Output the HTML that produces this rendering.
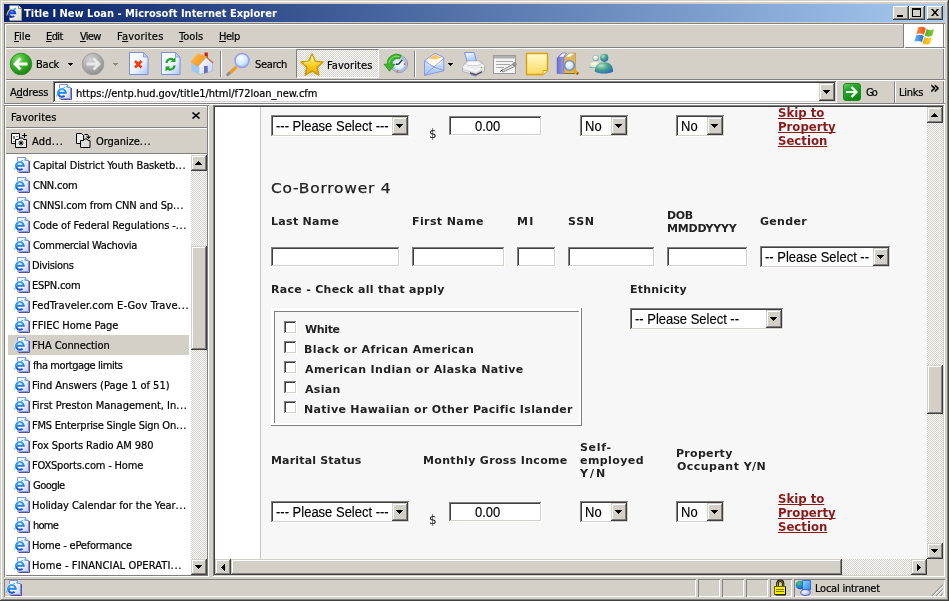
<!DOCTYPE html>
<html><head><meta charset="utf-8"><title>Title I New Loan - Microsoft Internet Explorer</title>
<style>
*{box-sizing:border-box;margin:0;padding:0}
html,body{width:949px;height:601px;overflow:hidden;background:#d4d0c8}
body{position:relative;font:11px 'DejaVu Sans Condensed','Liberation Sans',sans-serif;color:#000;cursor:default;-webkit-text-stroke-width:.2px}
#w{position:absolute;left:0;top:0;width:949px;height:601px;will-change:transform;overflow:hidden}
.a{position:absolute}
.t{position:absolute;white-space:pre;line-height:13px;height:13px}
svg{position:absolute;overflow:visible}
.btn{position:absolute;background:#d4d0c8;box-shadow:inset -1px -1px 0 #404040,inset 1px 1px 0 #fff,inset -2px -2px 0 #808080,inset 2px 2px 0 #d4d0c8}
.sbtn{position:absolute;background:#d4d0c8;box-shadow:inset -1px -1px 0 #404040,inset 1px 1px 0 #d4d0c8,inset -2px -2px 0 #808080,inset 2px 2px 0 #fff}
.trk{position:absolute;background-color:#eae8e4;background-image:conic-gradient(#fff 25%,#d4d0c8 0 50%,#fff 0 75%,#d4d0c8 0);background-size:2px 2px}
.sunk{position:absolute;box-shadow:inset -1px -1px 0 #fff,inset 1px 1px 0 #808080,inset -2px -2px 0 #d4d0c8,inset 2px 2px 0 #404040}
.inp{position:absolute;background:#fff;box-shadow:inset -1px -1px 0 #fff,inset 1px 1px 0 #808080,inset -2px -2px 0 #d4d0c8,inset 2px 2px 0 #404040}
.pg{font:bold 11px 'DejaVu Sans','Liberation Sans',sans-serif;letter-spacing:.3px;color:#222;-webkit-text-stroke-width:0}
.sel{font:13px 'Liberation Sans',sans-serif;color:#000;-webkit-text-stroke-width:.15px;transform:scaleY(1.1);transform-origin:0 12px}
.lnk{font:bold 13px 'DejaVu Sans Condensed','Liberation Sans',sans-serif;color:#8b1a1a;-webkit-text-stroke-width:0;text-decoration:underline;text-decoration-skip-ink:none;line-height:14px;height:auto}
.h1{font:14px 'DejaVu Sans','Liberation Sans',sans-serif;letter-spacing:.5px;color:#222;-webkit-text-stroke-width:.25px;line-height:18px;height:18px;transform:scaleX(1.1);transform-origin:0 0}
.hl{position:absolute;height:1px}
.vl{position:absolute;width:1px}
</style></head>
<body>
<div id="w">
<svg style="left:0;top:0" width="0" height="0"><defs><linearGradient id="tpg" x1="0" y1="0" x2="1" y2="1"><stop offset="0" stop-color="#fdfdf8"/><stop offset="1" stop-color="#dcdccc"/></linearGradient><linearGradient id="ipg" x1="0" y1="0" x2="1" y2="1"><stop offset="0" stop-color="#fff"/><stop offset=".45" stop-color="#f4f5ff"/><stop offset="1" stop-color="#c4ccf6"/></linearGradient><linearGradient id="ie" gradientUnits="userSpaceOnUse" x1="0" y1="4" x2="0" y2="14"><stop offset="0" stop-color="#3aa8f6"/><stop offset=".5" stop-color="#1e7ee8"/><stop offset="1" stop-color="#1a4cc0"/></linearGradient></defs></svg>
<div class="a" style="left:0;top:0;width:949px;height:601px;background:#d4d0c8;box-shadow:inset -1px -1px 0 #404040,inset 1px 1px 0 #d4d0c8,inset -2px -2px 0 #808080,inset 2px 2px 0 #fff"></div>
<div class="a" style="left:4px;top:4px;width:941px;height:18px;background:linear-gradient(90deg,#0a246a 0%,#0a246a 2%,#a6caf0 100%)"></div>
<svg style="left:6px;top:5px" width="16" height="16" viewBox="0 0 16 16"><path d="M3.500.500h9l3 3v12h-12z" fill="url(#tpg)"/><path d="M12.500.500v3h3" fill="#fff" stroke="#6a6a60" stroke-width=".8"/><path d="M4 15.500h11.500V4" fill="none" stroke="#9a9888" stroke-width="1"/><path d="M2.800 8.200h6.400a3.200 3.200 0 1 0-1 2.800" fill="none" stroke="#1a44d8" stroke-width="2"/><path d="M7.500 4.500l2.500-1" stroke="#30b0f8" stroke-width="1.400"/><path d="M.800 10.500C1.500 7 3 5 5 3.800" fill="none" stroke="#e8c040" stroke-width="1.100"/><path d="M3.500 12h2" stroke="#000" stroke-width="1"/></svg>
<div class="t tt" style="left:24px;top:7px;color:#fff;font-weight:bold;-webkit-text-stroke-width:0;line-height:14px;height:14px">Title I New Loan - Microsoft Internet Explorer</div>
<div class="btn" style="left:893px;top:6px;width:16px;height:14px"></div>
<div class="btn" style="left:909px;top:6px;width:16px;height:14px"></div>
<div class="btn" style="left:927px;top:6px;width:16px;height:14px"></div>
<div class="a" style="left:897px;top:15px;width:6px;height:2px;background:#000"></div>
<div class="a" style="left:912px;top:8px;width:9px;height:9px;border:1px solid #000;border-top-width:2px"></div>
<svg style="left:931px;top:9px" width="8" height="7" viewBox="0 0 8 7"><path d="M0 0h2l2 2.5L6 0h2L5 3.5 8 7H6L4 4.5 2 7H0l3-3.5z" fill="#000"/></svg>
<div class="a" style="left:4px;top:23px;width:941px;height:1px;background:#808080"></div>
<div class="a" style="left:4px;top:24px;width:941px;height:1px;background:#fff"></div>
<div class="t mn" style="left:14px;top:30px;"><u>F</u>ile</div>
<div class="t mn" style="left:46px;top:30px;letter-spacing:-0.6px;"><u>E</u>dit</div>
<div class="t mn" style="left:80px;top:30px;letter-spacing:-0.73px;"><u>V</u>iew</div>
<div class="t mn" style="left:117px;top:30px;letter-spacing:0.21px;">F<u>a</u>vorites</div>
<div class="t mn" style="left:179px;top:30px;"><u>T</u>ools</div>
<div class="t mn" style="left:219px;top:30px;letter-spacing:-0.47px;"><u>H</u>elp</div>
<div class="a" style="left:904px;top:24px;width:39px;height:23px;background:#fff"></div>
<div class="a" style="left:903px;top:24px;width:1px;height:23px;background:#808080"></div>
<div class="a" style="left:904px;top:24px;width:1px;height:24px;background:#fff"></div>
<div class="a" style="left:943px;top:24px;width:1px;height:80px;background:#808080"></div>
<div class="a" style="left:944px;top:24px;width:1px;height:80px;background:#fff"></div>
<svg style="left:0;top:0" width="949" height="60" viewBox="0 0 949 60"><defs><linearGradient id="wr" x1="0" x2="1"><stop offset="0" stop-color="#ff8a3c"/><stop offset="1" stop-color="#e8501c"/></linearGradient><linearGradient id="wg" x1="0" x2="1"><stop offset="0" stop-color="#5aa52c"/><stop offset="1" stop-color="#7fd22c"/></linearGradient><linearGradient id="wb" x1="0" x2="1"><stop offset="0" stop-color="#6cb6f8"/><stop offset="1" stop-color="#2a6cc8"/></linearGradient><linearGradient id="wy" x1="0" x2="1"><stop offset="0" stop-color="#f0a818"/><stop offset="1" stop-color="#ffd62c"/></linearGradient></defs><path d="M918 27.600c2.600-1.300 5.300-1 7.800.6L924 34.800c-2.300-1.400-4.900-1.600-7.600-.4z" fill="url(#wr)"/><path d="M926.500 29c2.400 1.500 5 1.600 7.500 0l-1.700 6.500c-2.500 1.500-5 1.500-7.500 0z" fill="url(#wg)"/><path d="M916 35.500c2.600-1.300 5.200-1.100 7.700.4l-1.700 6.400c-2.400-1.400-5-1.600-7.700-.4z" fill="url(#wb)"/><path d="M924.300 37c2.400 1.500 5 1.600 7.500 0l-1.700 6.400c-2.500 1.600-5 1.600-7.500.1z" fill="url(#wy)"/></svg>
<div class="a" style="left:4px;top:47px;width:941px;height:1px;background:#808080"></div>
<div class="a" style="left:4px;top:48px;width:941px;height:1px;background:#fff"></div>
<div class="a" style="left:904px;top:24px;width:1px;height:24px;background:#fff"></div>
<div class="trk" style="left:297px;top:50px;width:81px;height:27px"></div>
<svg style="left:0;top:0" width="949" height="601" viewBox="0 0 949 601">
<defs>
<radialGradient id="gB" cx=".38" cy=".3" r=".75"><stop offset="0" stop-color="#8ee06a"/><stop offset=".45" stop-color="#3cb42c"/><stop offset="1" stop-color="#1a7a14"/></radialGradient>
<radialGradient id="gF" cx=".38" cy=".3" r=".75"><stop offset="0" stop-color="#d4d4d4"/><stop offset=".5" stop-color="#b0b0b0"/><stop offset="1" stop-color="#8c8c8c"/></radialGradient>
<linearGradient id="gP" x1="0" y1="0" x2="1" y2="1"><stop offset="0" stop-color="#ffffff"/><stop offset=".55" stop-color="#eef3ff"/><stop offset="1" stop-color="#a9c6f5"/></linearGradient>
<radialGradient id="gL" cx=".4" cy=".35" r=".7"><stop offset="0" stop-color="#ffffff"/><stop offset=".6" stop-color="#cfe8ff"/><stop offset="1" stop-color="#8fc0f2"/></radialGradient>
<linearGradient id="gS" x1="0" y1="0" x2="0" y2="1"><stop offset="0" stop-color="#fff27a"/><stop offset=".5" stop-color="#fdd22a"/><stop offset="1" stop-color="#e9a500"/></linearGradient>
<linearGradient id="gN" x1="0" y1="0" x2="0" y2="1"><stop offset="0" stop-color="#fffbd0"/><stop offset="1" stop-color="#ffd95e"/></linearGradient>
<linearGradient id="gM" x1="0" y1="0" x2="0" y2="1"><stop offset="0" stop-color="#eaf3ff"/><stop offset="1" stop-color="#9fc6f3"/></linearGradient>
<linearGradient id="gK" x1="0" y1="0" x2="1" y2="0"><stop offset="0" stop-color="#6d6fd0"/><stop offset="1" stop-color="#a7a9ee"/></linearGradient>
<radialGradient id="gG" cx=".4" cy=".3" r=".8"><stop offset="0" stop-color="#9ad8b4"/><stop offset=".5" stop-color="#3f9c7c"/><stop offset="1" stop-color="#2a6cb8"/></radialGradient>
<radialGradient id="gC" cx=".5" cy=".5" r=".5"><stop offset="0" stop-color="#ffffff"/><stop offset=".7" stop-color="#d8ecfa"/><stop offset="1" stop-color="#9cc4e4"/></radialGradient>
</defs>
<!-- Back -->
<circle cx="21" cy="64" r="10.800" fill="url(#gB)" stroke="#2a8a1e" stroke-width=".8"/>
<path d="M27.500 64H16M20.500 58.500L15 64l5.500 5.500" fill="none" stroke="#fff" stroke-width="2.800" stroke-linejoin="miter"/>
<path d="M68 63h5v1h-1v1h-1v1h-1v-1h-1v-1h-1z" fill="#000"/>
<!-- Forward -->
<circle cx="93" cy="64" r="10.800" fill="url(#gF)" stroke="#9a9a9a" stroke-width=".8"/>
<path d="M86.500 64H98M93.500 58.500L99 64l-5.500 5.500" fill="none" stroke="#e8e8e8" stroke-width="2.800"/>
<path d="M113 63h5v1h-1v1h-1v1h-1v-1h-1v-1h-1z" fill="#8a8a8a"/>
<!-- Stop -->
<path d="M129.500 52.500h14l4.500 4.500v17.500h-18.500z" fill="url(#gP)" stroke="#7d8fd0"/>
<path d="M143.500 52.500v4.500h4.500z" fill="#c2d4f7" stroke="#7d8fd0" stroke-width=".8"/>
<path d="M135 61l6.500 6.500M141.500 61L135 67.500" stroke="#f03a14" stroke-width="2.600"/>
<!-- Refresh -->
<path d="M161.500 52.500h14l4.500 4.500v17.500h-18.500z" fill="url(#gP)" stroke="#7d8fd0"/>
<path d="M175.500 52.500v4.500h4.500z" fill="#c2d4f7" stroke="#7d8fd0" stroke-width=".8"/>
<path d="M166.500 63a4.300 4.300 0 0 1 7.500-2.600" fill="none" stroke="#1fa32a" stroke-width="2.200"/>
<path d="M175.500 57v5h-5z" fill="#1fa32a"/>
<path d="M174.500 65.500a4.300 4.300 0 0 1-7.500 2.600" fill="none" stroke="#1fa32a" stroke-width="2.200"/>
<path d="M165.500 71.500v-5h5z" fill="#1fa32a"/>
<!-- Home -->
<defs><linearGradient id="gR" x1="0" y1="0" x2="1" y2="1"><stop offset="0" stop-color="#ffc04a"/><stop offset="1" stop-color="#f08a1e"/></linearGradient>
<linearGradient id="gW" x1="0" y1="0" x2="1" y2="1"><stop offset="0" stop-color="#ffffff"/><stop offset="1" stop-color="#c6d2f2"/></linearGradient></defs>
<path d="M204.500 52.500h3.300v5l-3.300-2z" fill="#c4200e"/>
<path d="M191 62.500l7 3.500.5 8.700-7-4.200z" fill="#9cc8f4"/>
<path d="M199 65.500l7.200-8 6.300 5.500-.2 8-6.800 2.200-6.500 1.200z" fill="url(#gW)" stroke="#a4a8dc" stroke-width=".6"/>
<path d="M190.300 61.800l7.700-8.600 8.500 3.200-7.700 9.200-1.500 1z" fill="url(#gR)"/>
<path d="M206.300 57l6.800 6" stroke="#b4764a" stroke-width="1.200" fill="none"/>
<path d="M204 66h3.800v6.600l-3.800.8z" fill="#6a70bc"/>
<!-- sep -->
<path d="M220.500 51v26" stroke="#808080"/><path d="M221.500 51v26" stroke="#fff"/>
<!-- Search -->
<path d="M236.500 67l-8 7" stroke="#ee9a2a" stroke-width="3.200" stroke-linecap="butt"/>
<path d="M229 73.500l-1.300 1.200" stroke="#8a8aa0" stroke-width="3" stroke-linecap="round"/>
<circle cx="242" cy="60.500" r="7" fill="url(#gL)" stroke="#949ce4" stroke-width="1.500"/>
<!-- Favorites pressed -->
<path d="M296.500 77.500v-28h82" fill="none" stroke="#808080"/>
<path d="M297 77.500h81.500V50" fill="none" stroke="#fff"/>
<path d="M312.0 54.0L315.2 61.2L323.0 62.0L317.1 67.3L318.8 75.0L312.0 71.0L305.2 75.0L306.9 67.3L301.0 62.0L308.8 61.2z" fill="url(#gS)" stroke="#d09a10" stroke-width="1.600" stroke-linejoin="round"/>
<path d="M312 56.500l1.800 5.300M305 62.500l4.500-.3" stroke="#fff8b0" stroke-width="1" fill="none" stroke-linecap="round"/>
<!-- History -->
<circle cx="399" cy="64" r="8.600" fill="#c4c4d0" stroke="#9a9aae" stroke-width="1"/>
<circle cx="399" cy="64" r="6.800" fill="url(#gC)" stroke="#8fb4e4" stroke-width=".8"/>
<path d="M398.500 64.300l3.800-4.500M398.500 64.300h-2.800" stroke="#3c3c48" stroke-width="1.500" fill="none"/>
<circle cx="404.600" cy="64" r=".9" fill="#f4602c"/><circle cx="397.500" cy="71" r=".9" fill="#f4602c"/>
<path d="M401 55.200A9.300 9.300 0 0 0 387.300 64.200H384l5.600 7 5.400-7h-3.300a5.400 5.400 0 0 1 7.800-5.200z" fill="#3fb52a" stroke="#1c8a18" stroke-width=".7" stroke-linejoin="round"/>
<path d="M399.500 56.500a8 8 0 0 0-10.500 6.500" fill="none" stroke="#8ee46a" stroke-width="1"/>
<!-- sep -->
<path d="M414.500 51v26" stroke="#808080"/><path d="M415.500 51v26" stroke="#fff"/>
<!-- Mail -->
<path d="M424.500 60.800l10.300-7.600 9 4.200v13.400l-19.300 4.600z" fill="url(#gM)" stroke="#8f97e0" stroke-width="1"/>
<path d="M427.500 59.500l7.300-5 7.200 3.300-.8 5.200-6.400 3.500-7-2.500z" fill="#fffaf0"/>
<path d="M428.500 58.500l6.300-4 6.700 3-6 2z" fill="#f9c668"/>
<path d="M424.500 61l9.500 6 9.700-8.500M424.800 75l9.200-8 9.500 3.500" fill="none" stroke="#8f97e0" stroke-width=".9"/>
<path d="M448 63h5v1h-1v1h-1v1h-1v-1h-1v-1h-1z" fill="#000"/>
<!-- Print -->
<defs><linearGradient id="gPa" x1="0" y1="0" x2=".3" y2="1"><stop offset="0" stop-color="#ffffff"/><stop offset="1" stop-color="#9cc8fc"/></linearGradient></defs>
<path d="M464.500 52.500h9.500l2.800 9.500h-9.600z" fill="url(#gPa)" stroke="#7488e0" stroke-width=".9"/>
<path d="M462.500 66.500l4.500-5.500h13l4.500 4v6l-8.500 4.500-13.500-4z" fill="#ececee" stroke="#a4a4ac" stroke-width=".8"/>
<path d="M466 63.500l2.500-2.500h10l3 2.500-3.500 2h-10z" fill="#fafafa" stroke="#b8b8c0" stroke-width=".6"/>
<path d="M462.500 67l13.500 3.800 8.500-5" fill="none" stroke="#fff" stroke-width="1"/>
<path d="M462.800 69.500l13.200 4 8.500-4.800" fill="none" stroke="#c4c4cc" stroke-width=".8"/>
<path d="M470 72.300l6 1.800 6-3.200v1.500l-6 3.200-6-1.800z" fill="#4c4c58"/>
<path d="M471 74.800l5 1.400" stroke="#6a7ae0" stroke-width=".8"/>
<circle cx="481.500" cy="67.500" r=".8" fill="#46c83c"/>
<!-- Edit -->
<rect x="493.500" y="55.500" width="22" height="18" fill="#f4f4f4" stroke="#9a9a9a"/>
<rect x="494" y="56" width="21" height="2.500" fill="#b0b0b0"/>
<path d="M496 61.500h17M496 64.500h14M496 67.500h8" stroke="#a8a8a8" stroke-width="1"/>
<path d="M501.500 70.500l11.500-6.300 1.600 2.400-11.600 5.400z" fill="#dcdcdc" stroke="#787878" stroke-width=".8"/>
<path d="M500 71.500l2.500-1.500" stroke="#505050" stroke-width="1"/>
<circle cx="514.500" cy="64.300" r="1.700" fill="#a0a0a0" stroke="#686868" stroke-width=".6"/>
<!-- Discuss -->
<path d="M526.500 53.500h21v17l-4.500 4h-16.500z" fill="url(#gN)" stroke="#e0a000" stroke-width="1.400"/>
<path d="M547.500 70.500h-4.500v4" fill="#fff3b0" stroke="#e0a000" stroke-width="1"/>
<!-- Research -->
<path d="M557 58l5-5h4.500l-2.500 4.500v16h-7z" fill="url(#gK)" stroke="#5a5cc0" stroke-width=".5"/>
<path d="M559.300 56.800l3.300-3.300h3l-2.600 3.300z" fill="#f6f6fc"/>
<path d="M564 58l5-5h6.500v20.500H564z" fill="#dcb658" stroke="#a8842c" stroke-width=".5"/>
<path d="M566 56.800l3.500-3.300h4.300l-3.500 3.300z" fill="#f8f8fc"/>
<path d="M564.500 73.500h10.500" stroke="#8a6a20" stroke-width="1"/>
<path d="M573.300 69.500l4.700 4.200" stroke="#f0a818" stroke-width="2.800" stroke-linecap="butt"/>
<path d="M577 73l1.200 1" stroke="#7a5a10" stroke-width="2.800"/>
<circle cx="569.500" cy="65.500" r="4.800" fill="url(#gL)" stroke="#6a86c0" stroke-width="1.300"/>
<!-- Messenger -->
<defs><radialGradient id="gH" cx=".35" cy=".3" r=".8"><stop offset="0" stop-color="#b8e4c8"/><stop offset=".45" stop-color="#4aa488"/><stop offset="1" stop-color="#2464c0"/></radialGradient>
<radialGradient id="gh" cx=".4" cy=".3" r=".8"><stop offset="0" stop-color="#ffffe8"/><stop offset=".6" stop-color="#d8e8c0"/><stop offset="1" stop-color="#3a80e0"/></radialGradient></defs>
<circle cx="595.700" cy="58" r="2.900" fill="url(#gh)" stroke="#5a90d8" stroke-width=".5"/>
<path d="M589.500 68c.3-4.500 2.800-6.300 6.200-6.300 3.200 0 5.300 1.600 5.800 6.300z" fill="url(#gh)"/>
<circle cx="604.300" cy="57.800" r="4.100" fill="url(#gH)"/>
<path d="M594.700 71.500c.3-6.500 4-9.200 9.600-9.200 5.400 0 8.600 3 8.900 9.200-4.500 2.700-14 2.700-18.500 0z" fill="url(#gH)"/>
</svg>

<div class="t tb" style="left:36px;top:58px;letter-spacing:-0.23px;">Back</div>
<div class="t tb" style="left:255px;top:58px;letter-spacing:-0.32px;">Search</div>
<div class="t tb" style="left:327px;top:59px;letter-spacing:0.09px;">Favorites</div>
<div class="a" style="left:4px;top:79px;width:941px;height:1px;background:#808080"></div>
<div class="a" style="left:4px;top:80px;width:941px;height:1px;background:#fff"></div>
<div class="t ui" style="left:10px;top:86px;letter-spacing:-0.18px;">A<u>d</u>dress</div>
<div class="sunk" style="left:53px;top:81px;width:784px;height:22px;background:#fff"></div>
<svg style="left:56px;top:84px" width="16" height="16" viewBox="0 0 16 16"><path d="M4.500 15.500h11V4" fill="none" stroke="#5c4e94" stroke-width="1"/><path d="M3.500.500h8l3 3v11h-11z" fill="url(#ipg)" stroke="#7f96e0" stroke-width="1"/><path d="M11.500.500v3h3" fill="#fff" stroke="#7f96e0" stroke-width="1"/><path d="M1.600 8.700h8.200a3.900 3.900 0 1 0-1.200 3" fill="none" stroke="#fff" stroke-opacity=".7" stroke-width="3.400"/><path d="M1.600 8.700h8.200a3.900 3.900 0 1 0-1.200 3" fill="none" stroke="url(#ie)" stroke-width="2"/><path d="M.600 12.500C1.500 7.500 6.500 3 12.800 2.500" fill="none" stroke="#48b4f8" stroke-width="1" stroke-dasharray="2.500 1"/></svg>
<div class="t ui" style="left:76px;top:87px;letter-spacing:-0.03px;">https://entp.hud.gov/title1/html/f72loan_new.cfm</div>
<div class="sbtn" style="left:819px;top:83px;width:16px;height:18px"></div>
<svg style="left:823px;top:90px" width="7" height="4" viewBox="0 0 7 4"><path d="M0 0h7v1h-1v1h-1v1h-1v1h-1v-1h-1v-1h-1v-1h-1z" fill="#000"/></svg>
<svg style="left:843px;top:83px" width="18" height="18" viewBox="0 0 18 18"><defs><linearGradient id="go" x1="0" y1="0" x2=".6" y2="1"><stop offset="0" stop-color="#7ad07a"/><stop offset=".35" stop-color="#2aa82e"/><stop offset="1" stop-color="#0a8a10"/></linearGradient></defs><rect x=".5" y=".5" width="17" height="17" rx="2.500" fill="url(#go)" stroke="#1c8a24"/><path d="M3 9h10.500M8.500 4l5 5-5 5" fill="none" stroke="#fff" stroke-width="2.200"/></svg>
<div class="t ui" style="left:866px;top:86px;letter-spacing:-2.0px;">Go</div>
<div class="a" style="left:894px;top:82px;width:1px;height:21px;background:#808080"></div>
<div class="a" style="left:895px;top:82px;width:1px;height:21px;background:#fff"></div>
<div class="t ui" style="left:899px;top:86px;letter-spacing:-0.25px;">Links</div>
<div class="t " style="left:930px;top:79px;font:bold 15px 'DejaVu Sans',sans-serif">»</div>
<div class="a" style="left:4px;top:103px;width:941px;height:1px;background:#808080"></div>
<div class="a" style="left:4px;top:104px;width:941px;height:1px;background:#fff"></div>
<div class="a" style="left:4px;top:23px;width:1px;height:81px;background:#808080"></div>
<div class="a" style="left:5px;top:24px;width:1px;height:79px;background:#fff"></div>
<div class="a" style="left:4px;top:105px;width:205px;height:472px;background:#d4d0c8;box-shadow:inset 1px 1px 0 #808080,inset -1px -1px 0 #fff,inset 2px 2px 0 #fff,inset -2px -2px 0 #808080"></div>
<div class="t hd" style="left:11px;top:111px;letter-spacing:0.11px;">Favorites</div>
<svg style="left:192px;top:112px" width="8" height="7" viewBox="0 0 8 8" preserveAspectRatio="none"><path d="M.5.500l7 7M7.500.500l-7 7" stroke="#000" stroke-width="1.700"/></svg>
<div class="a" style="left:207px;top:105px;width:1px;height:471px;background:#808080"></div>
<div class="a" style="left:6px;top:127px;width:201px;height:1px;background:#808080"></div>
<div class="a" style="left:6px;top:128px;width:201px;height:1px;background:#fff"></div>
<div class="t ui" style="left:32px;top:135px;letter-spacing:0.16px;">Add<span style="letter-spacing:0.86px">...</span></div>
<div class="t ui" style="left:96px;top:135px;letter-spacing:-0.06px;">Organize<span style="letter-spacing:0.64px">...</span></div>
<svg style="left:0;top:0" width="208" height="160" viewBox="0 0 208 160">
<path d="M11.500 133.500h8v10h-8z" fill="#f4f4f4" stroke="#000"/>
<path d="M13 136h2v3h-2z" fill="#808080"/><path d="M16 136.500h2M13 141.500h3" stroke="#808080"/>
<path d="M15.500 147.500v-8h3l1-1.500h3l1 1.500h3v8z" fill="#e8e8e8" stroke="#000"/>
<path d="M21 140.500v5M18.500 143h5M19.300 141.300l3.400 3.400M22.700 141.300l-3.400 3.400" stroke="#000" stroke-width="1"/>
<path d="M24.500 133v5M22 135.500h5" stroke="#000"/>
<path d="M76.500 133.500h5l2 2v8h-7z" fill="#ececec" stroke="#000"/>
<path d="M80.500 147.500v-7h3l1-1.500h2.500l1 1.500h2v7z" fill="#dcdcdc" stroke="#000"/>
<path d="M84.500 134.500h2.500c1.500 0 1.500 1 1.500 2" fill="none" stroke="#000"/>
<path d="M86 136.500h5l-2.500 2.500z" fill="#000"/>
</svg>

<div class="a" style="left:6px;top:153px;width:201px;height:1px;background:#808080"></div>
<div class="a" style="left:5px;top:154px;width:202px;height:421px;background:#fff"></div>
<svg style="left:14px;top:157px" width="16" height="16" viewBox="0 0 16 16"><path d="M4.500 15.500h11V4" fill="none" stroke="#5c4e94" stroke-width="1"/><path d="M3.500.500h8l3 3v11h-11z" fill="url(#ipg)" stroke="#7f96e0" stroke-width="1"/><path d="M11.500.500v3h3" fill="#fff" stroke="#7f96e0" stroke-width="1"/><path d="M1.600 8.700h8.200a3.900 3.900 0 1 0-1.200 3" fill="none" stroke="#fff" stroke-opacity=".7" stroke-width="3.400"/><path d="M1.600 8.700h8.200a3.900 3.900 0 1 0-1.200 3" fill="none" stroke="url(#ie)" stroke-width="2"/><path d="M.600 12.500C1.500 7.500 6.500 3 12.800 2.500" fill="none" stroke="#48b4f8" stroke-width="1" stroke-dasharray="2.500 1"/></svg>
<div class="t fv" style="left:33px;top:159px;letter-spacing:-0.14px;">Capital District Youth Basketb<span style="letter-spacing:0.56px">...</span></div>
<svg style="left:14px;top:177px" width="16" height="16" viewBox="0 0 16 16"><path d="M4.500 15.500h11V4" fill="none" stroke="#5c4e94" stroke-width="1"/><path d="M3.500.500h8l3 3v11h-11z" fill="url(#ipg)" stroke="#7f96e0" stroke-width="1"/><path d="M11.500.500v3h3" fill="#fff" stroke="#7f96e0" stroke-width="1"/><path d="M1.600 8.700h8.200a3.900 3.900 0 1 0-1.200 3" fill="none" stroke="#fff" stroke-opacity=".7" stroke-width="3.400"/><path d="M1.600 8.700h8.200a3.900 3.900 0 1 0-1.200 3" fill="none" stroke="url(#ie)" stroke-width="2"/><path d="M.600 12.500C1.500 7.500 6.500 3 12.800 2.500" fill="none" stroke="#48b4f8" stroke-width="1" stroke-dasharray="2.500 1"/></svg>
<div class="t fv" style="left:33px;top:179px;letter-spacing:-0.23px;">CNN.com</div>
<svg style="left:14px;top:197px" width="16" height="16" viewBox="0 0 16 16"><path d="M4.500 15.500h11V4" fill="none" stroke="#5c4e94" stroke-width="1"/><path d="M3.500.500h8l3 3v11h-11z" fill="url(#ipg)" stroke="#7f96e0" stroke-width="1"/><path d="M11.500.500v3h3" fill="#fff" stroke="#7f96e0" stroke-width="1"/><path d="M1.600 8.700h8.200a3.900 3.900 0 1 0-1.200 3" fill="none" stroke="#fff" stroke-opacity=".7" stroke-width="3.400"/><path d="M1.600 8.700h8.200a3.900 3.900 0 1 0-1.200 3" fill="none" stroke="url(#ie)" stroke-width="2"/><path d="M.600 12.500C1.500 7.500 6.500 3 12.800 2.500" fill="none" stroke="#48b4f8" stroke-width="1" stroke-dasharray="2.500 1"/></svg>
<div class="t fv" style="left:33px;top:199px;letter-spacing:-0.15px;">CNNSI.com from CNN and Sp<span style="letter-spacing:0.55px">...</span></div>
<svg style="left:14px;top:217px" width="16" height="16" viewBox="0 0 16 16"><path d="M4.500 15.500h11V4" fill="none" stroke="#5c4e94" stroke-width="1"/><path d="M3.500.500h8l3 3v11h-11z" fill="url(#ipg)" stroke="#7f96e0" stroke-width="1"/><path d="M11.500.500v3h3" fill="#fff" stroke="#7f96e0" stroke-width="1"/><path d="M1.600 8.700h8.200a3.900 3.900 0 1 0-1.200 3" fill="none" stroke="#fff" stroke-opacity=".7" stroke-width="3.400"/><path d="M1.600 8.700h8.200a3.900 3.900 0 1 0-1.200 3" fill="none" stroke="url(#ie)" stroke-width="2"/><path d="M.600 12.500C1.500 7.500 6.500 3 12.800 2.500" fill="none" stroke="#48b4f8" stroke-width="1" stroke-dasharray="2.500 1"/></svg>
<div class="t fv" style="left:33px;top:219px;letter-spacing:-0.09px;">Code of Federal Regulations -<span style="letter-spacing:0.61px">...</span></div>
<svg style="left:14px;top:237px" width="16" height="16" viewBox="0 0 16 16"><path d="M4.500 15.500h11V4" fill="none" stroke="#5c4e94" stroke-width="1"/><path d="M3.500.500h8l3 3v11h-11z" fill="url(#ipg)" stroke="#7f96e0" stroke-width="1"/><path d="M11.500.500v3h3" fill="#fff" stroke="#7f96e0" stroke-width="1"/><path d="M1.600 8.700h8.200a3.900 3.900 0 1 0-1.200 3" fill="none" stroke="#fff" stroke-opacity=".7" stroke-width="3.400"/><path d="M1.600 8.700h8.200a3.900 3.900 0 1 0-1.200 3" fill="none" stroke="url(#ie)" stroke-width="2"/><path d="M.600 12.500C1.500 7.500 6.500 3 12.800 2.500" fill="none" stroke="#48b4f8" stroke-width="1" stroke-dasharray="2.500 1"/></svg>
<div class="t fv" style="left:33px;top:239px;letter-spacing:-0.31px;">Commercial Wachovia</div>
<svg style="left:14px;top:257px" width="16" height="16" viewBox="0 0 16 16"><path d="M4.500 15.500h11V4" fill="none" stroke="#5c4e94" stroke-width="1"/><path d="M3.500.500h8l3 3v11h-11z" fill="url(#ipg)" stroke="#7f96e0" stroke-width="1"/><path d="M11.500.500v3h3" fill="#fff" stroke="#7f96e0" stroke-width="1"/><path d="M1.600 8.700h8.200a3.900 3.900 0 1 0-1.200 3" fill="none" stroke="#fff" stroke-opacity=".7" stroke-width="3.400"/><path d="M1.600 8.700h8.200a3.900 3.900 0 1 0-1.200 3" fill="none" stroke="url(#ie)" stroke-width="2"/><path d="M.600 12.500C1.500 7.500 6.500 3 12.800 2.500" fill="none" stroke="#48b4f8" stroke-width="1" stroke-dasharray="2.500 1"/></svg>
<div class="t fv" style="left:32px;top:259px;letter-spacing:-0.31px;">Divisions</div>
<svg style="left:14px;top:277px" width="16" height="16" viewBox="0 0 16 16"><path d="M4.500 15.500h11V4" fill="none" stroke="#5c4e94" stroke-width="1"/><path d="M3.500.500h8l3 3v11h-11z" fill="url(#ipg)" stroke="#7f96e0" stroke-width="1"/><path d="M11.500.500v3h3" fill="#fff" stroke="#7f96e0" stroke-width="1"/><path d="M1.600 8.700h8.200a3.900 3.900 0 1 0-1.200 3" fill="none" stroke="#fff" stroke-opacity=".7" stroke-width="3.400"/><path d="M1.600 8.700h8.200a3.900 3.900 0 1 0-1.200 3" fill="none" stroke="url(#ie)" stroke-width="2"/><path d="M.600 12.500C1.500 7.500 6.500 3 12.800 2.500" fill="none" stroke="#48b4f8" stroke-width="1" stroke-dasharray="2.500 1"/></svg>
<div class="t fv" style="left:32px;top:279px;letter-spacing:-0.23px;">ESPN.com</div>
<svg style="left:14px;top:297px" width="16" height="16" viewBox="0 0 16 16"><path d="M4.500 15.500h11V4" fill="none" stroke="#5c4e94" stroke-width="1"/><path d="M3.500.500h8l3 3v11h-11z" fill="url(#ipg)" stroke="#7f96e0" stroke-width="1"/><path d="M11.500.500v3h3" fill="#fff" stroke="#7f96e0" stroke-width="1"/><path d="M1.600 8.700h8.200a3.900 3.900 0 1 0-1.200 3" fill="none" stroke="#fff" stroke-opacity=".7" stroke-width="3.400"/><path d="M1.600 8.700h8.200a3.900 3.900 0 1 0-1.200 3" fill="none" stroke="url(#ie)" stroke-width="2"/><path d="M.600 12.500C1.500 7.500 6.500 3 12.800 2.500" fill="none" stroke="#48b4f8" stroke-width="1" stroke-dasharray="2.500 1"/></svg>
<div class="t fv" style="left:32px;top:299px;letter-spacing:0.11px;">FedTraveler.com E-Gov Trave<span style="letter-spacing:0.81px">...</span></div>
<svg style="left:14px;top:317px" width="16" height="16" viewBox="0 0 16 16"><path d="M4.500 15.500h11V4" fill="none" stroke="#5c4e94" stroke-width="1"/><path d="M3.500.500h8l3 3v11h-11z" fill="url(#ipg)" stroke="#7f96e0" stroke-width="1"/><path d="M11.500.500v3h3" fill="#fff" stroke="#7f96e0" stroke-width="1"/><path d="M1.600 8.700h8.200a3.900 3.900 0 1 0-1.200 3" fill="none" stroke="#fff" stroke-opacity=".7" stroke-width="3.400"/><path d="M1.600 8.700h8.200a3.900 3.900 0 1 0-1.200 3" fill="none" stroke="url(#ie)" stroke-width="2"/><path d="M.600 12.500C1.500 7.500 6.500 3 12.800 2.500" fill="none" stroke="#48b4f8" stroke-width="1" stroke-dasharray="2.500 1"/></svg>
<div class="t fv" style="left:32px;top:319px;letter-spacing:-0.04px;">FFIEC Home Page</div>
<div class="a" style="left:8px;top:335px;width:181px;height:20px;background:#d4d0c8"></div>
<svg style="left:14px;top:337px" width="16" height="16" viewBox="0 0 16 16"><path d="M4.500 15.500h11V4" fill="none" stroke="#5c4e94" stroke-width="1"/><path d="M3.500.500h8l3 3v11h-11z" fill="url(#ipg)" stroke="#7f96e0" stroke-width="1"/><path d="M11.500.500v3h3" fill="#fff" stroke="#7f96e0" stroke-width="1"/><path d="M1.600 8.700h8.200a3.900 3.900 0 1 0-1.200 3" fill="none" stroke="#fff" stroke-opacity=".7" stroke-width="3.400"/><path d="M1.600 8.700h8.200a3.900 3.900 0 1 0-1.200 3" fill="none" stroke="url(#ie)" stroke-width="2"/><path d="M.600 12.500C1.500 7.500 6.500 3 12.800 2.500" fill="none" stroke="#48b4f8" stroke-width="1" stroke-dasharray="2.500 1"/></svg>
<div class="t fv" style="left:32px;top:339px;letter-spacing:-0.1px;">FHA Connection</div>
<svg style="left:14px;top:357px" width="16" height="16" viewBox="0 0 16 16"><path d="M4.500 15.500h11V4" fill="none" stroke="#5c4e94" stroke-width="1"/><path d="M3.500.500h8l3 3v11h-11z" fill="url(#ipg)" stroke="#7f96e0" stroke-width="1"/><path d="M11.500.500v3h3" fill="#fff" stroke="#7f96e0" stroke-width="1"/><path d="M1.600 8.700h8.200a3.900 3.900 0 1 0-1.200 3" fill="none" stroke="#fff" stroke-opacity=".7" stroke-width="3.400"/><path d="M1.600 8.700h8.200a3.900 3.900 0 1 0-1.200 3" fill="none" stroke="url(#ie)" stroke-width="2"/><path d="M.600 12.500C1.500 7.500 6.500 3 12.800 2.500" fill="none" stroke="#48b4f8" stroke-width="1" stroke-dasharray="2.500 1"/></svg>
<div class="t fv" style="left:33px;top:359px;letter-spacing:-0.42px;">fha mortgage limits</div>
<svg style="left:14px;top:377px" width="16" height="16" viewBox="0 0 16 16"><path d="M4.500 15.500h11V4" fill="none" stroke="#5c4e94" stroke-width="1"/><path d="M3.500.500h8l3 3v11h-11z" fill="url(#ipg)" stroke="#7f96e0" stroke-width="1"/><path d="M11.500.500v3h3" fill="#fff" stroke="#7f96e0" stroke-width="1"/><path d="M1.600 8.700h8.200a3.900 3.900 0 1 0-1.200 3" fill="none" stroke="#fff" stroke-opacity=".7" stroke-width="3.400"/><path d="M1.600 8.700h8.200a3.900 3.900 0 1 0-1.200 3" fill="none" stroke="url(#ie)" stroke-width="2"/><path d="M.600 12.500C1.500 7.500 6.500 3 12.800 2.500" fill="none" stroke="#48b4f8" stroke-width="1" stroke-dasharray="2.500 1"/></svg>
<div class="t fv" style="left:32px;top:379px;">Find Answers (Page 1 of 51)</div>
<svg style="left:14px;top:397px" width="16" height="16" viewBox="0 0 16 16"><path d="M4.500 15.500h11V4" fill="none" stroke="#5c4e94" stroke-width="1"/><path d="M3.500.500h8l3 3v11h-11z" fill="url(#ipg)" stroke="#7f96e0" stroke-width="1"/><path d="M11.500.500v3h3" fill="#fff" stroke="#7f96e0" stroke-width="1"/><path d="M1.600 8.700h8.200a3.900 3.900 0 1 0-1.200 3" fill="none" stroke="#fff" stroke-opacity=".7" stroke-width="3.400"/><path d="M1.600 8.700h8.200a3.900 3.900 0 1 0-1.200 3" fill="none" stroke="url(#ie)" stroke-width="2"/><path d="M.600 12.500C1.500 7.500 6.500 3 12.800 2.500" fill="none" stroke="#48b4f8" stroke-width="1" stroke-dasharray="2.500 1"/></svg>
<div class="t fv" style="left:32px;top:399px;letter-spacing:-0.02px;">First Preston Management, In<span style="letter-spacing:0.68px">...</span></div>
<svg style="left:14px;top:417px" width="16" height="16" viewBox="0 0 16 16"><path d="M4.500 15.500h11V4" fill="none" stroke="#5c4e94" stroke-width="1"/><path d="M3.500.500h8l3 3v11h-11z" fill="url(#ipg)" stroke="#7f96e0" stroke-width="1"/><path d="M11.500.500v3h3" fill="#fff" stroke="#7f96e0" stroke-width="1"/><path d="M1.600 8.700h8.200a3.900 3.900 0 1 0-1.200 3" fill="none" stroke="#fff" stroke-opacity=".7" stroke-width="3.400"/><path d="M1.600 8.700h8.200a3.900 3.900 0 1 0-1.200 3" fill="none" stroke="url(#ie)" stroke-width="2"/><path d="M.600 12.500C1.500 7.500 6.500 3 12.800 2.500" fill="none" stroke="#48b4f8" stroke-width="1" stroke-dasharray="2.500 1"/></svg>
<div class="t fv" style="left:32px;top:419px;letter-spacing:-0.21px;">FMS Enterprise Single Sign On<span style="letter-spacing:0.49px">...</span></div>
<svg style="left:14px;top:437px" width="16" height="16" viewBox="0 0 16 16"><path d="M4.500 15.500h11V4" fill="none" stroke="#5c4e94" stroke-width="1"/><path d="M3.500.500h8l3 3v11h-11z" fill="url(#ipg)" stroke="#7f96e0" stroke-width="1"/><path d="M11.500.500v3h3" fill="#fff" stroke="#7f96e0" stroke-width="1"/><path d="M1.600 8.700h8.200a3.900 3.900 0 1 0-1.200 3" fill="none" stroke="#fff" stroke-opacity=".7" stroke-width="3.400"/><path d="M1.600 8.700h8.200a3.900 3.900 0 1 0-1.200 3" fill="none" stroke="url(#ie)" stroke-width="2"/><path d="M.600 12.500C1.500 7.500 6.500 3 12.800 2.500" fill="none" stroke="#48b4f8" stroke-width="1" stroke-dasharray="2.500 1"/></svg>
<div class="t fv" style="left:32px;top:439px;letter-spacing:-0.07px;">Fox Sports Radio AM 980</div>
<svg style="left:14px;top:457px" width="16" height="16" viewBox="0 0 16 16"><path d="M4.500 15.500h11V4" fill="none" stroke="#5c4e94" stroke-width="1"/><path d="M3.500.500h8l3 3v11h-11z" fill="url(#ipg)" stroke="#7f96e0" stroke-width="1"/><path d="M11.500.500v3h3" fill="#fff" stroke="#7f96e0" stroke-width="1"/><path d="M1.600 8.700h8.200a3.900 3.900 0 1 0-1.200 3" fill="none" stroke="#fff" stroke-opacity=".7" stroke-width="3.400"/><path d="M1.600 8.700h8.200a3.900 3.900 0 1 0-1.200 3" fill="none" stroke="url(#ie)" stroke-width="2"/><path d="M.600 12.500C1.500 7.500 6.500 3 12.800 2.500" fill="none" stroke="#48b4f8" stroke-width="1" stroke-dasharray="2.500 1"/></svg>
<div class="t fv" style="left:32px;top:459px;letter-spacing:-0.18px;">FOXSports.com - Home</div>
<svg style="left:14px;top:477px" width="16" height="16" viewBox="0 0 16 16"><path d="M4.500 15.500h11V4" fill="none" stroke="#5c4e94" stroke-width="1"/><path d="M3.500.500h8l3 3v11h-11z" fill="url(#ipg)" stroke="#7f96e0" stroke-width="1"/><path d="M11.500.500v3h3" fill="#fff" stroke="#7f96e0" stroke-width="1"/><path d="M1.600 8.700h8.200a3.900 3.900 0 1 0-1.200 3" fill="none" stroke="#fff" stroke-opacity=".7" stroke-width="3.400"/><path d="M1.600 8.700h8.200a3.900 3.900 0 1 0-1.200 3" fill="none" stroke="url(#ie)" stroke-width="2"/><path d="M.600 12.500C1.500 7.500 6.500 3 12.800 2.500" fill="none" stroke="#48b4f8" stroke-width="1" stroke-dasharray="2.500 1"/></svg>
<div class="t fv" style="left:33px;top:479px;letter-spacing:-0.54px;">Google</div>
<svg style="left:14px;top:497px" width="16" height="16" viewBox="0 0 16 16"><path d="M4.500 15.500h11V4" fill="none" stroke="#5c4e94" stroke-width="1"/><path d="M3.500.500h8l3 3v11h-11z" fill="url(#ipg)" stroke="#7f96e0" stroke-width="1"/><path d="M11.500.500v3h3" fill="#fff" stroke="#7f96e0" stroke-width="1"/><path d="M1.600 8.700h8.200a3.900 3.900 0 1 0-1.200 3" fill="none" stroke="#fff" stroke-opacity=".7" stroke-width="3.400"/><path d="M1.600 8.700h8.200a3.900 3.900 0 1 0-1.200 3" fill="none" stroke="url(#ie)" stroke-width="2"/><path d="M.600 12.500C1.500 7.500 6.500 3 12.800 2.500" fill="none" stroke="#48b4f8" stroke-width="1" stroke-dasharray="2.500 1"/></svg>
<div class="t fv" style="left:32px;top:499px;letter-spacing:-0.05px;">Holiday Calendar for the Year<span style="letter-spacing:0.65px">...</span></div>
<svg style="left:14px;top:517px" width="16" height="16" viewBox="0 0 16 16"><path d="M4.500 15.500h11V4" fill="none" stroke="#5c4e94" stroke-width="1"/><path d="M3.500.500h8l3 3v11h-11z" fill="url(#ipg)" stroke="#7f96e0" stroke-width="1"/><path d="M11.500.500v3h3" fill="#fff" stroke="#7f96e0" stroke-width="1"/><path d="M1.600 8.700h8.200a3.900 3.900 0 1 0-1.200 3" fill="none" stroke="#fff" stroke-opacity=".7" stroke-width="3.400"/><path d="M1.600 8.700h8.200a3.900 3.900 0 1 0-1.200 3" fill="none" stroke="url(#ie)" stroke-width="2"/><path d="M.600 12.500C1.500 7.500 6.500 3 12.800 2.500" fill="none" stroke="#48b4f8" stroke-width="1" stroke-dasharray="2.500 1"/></svg>
<div class="t fv" style="left:33px;top:519px;letter-spacing:-0.74px;">home</div>
<svg style="left:14px;top:537px" width="16" height="16" viewBox="0 0 16 16"><path d="M4.500 15.500h11V4" fill="none" stroke="#5c4e94" stroke-width="1"/><path d="M3.500.500h8l3 3v11h-11z" fill="url(#ipg)" stroke="#7f96e0" stroke-width="1"/><path d="M11.500.500v3h3" fill="#fff" stroke="#7f96e0" stroke-width="1"/><path d="M1.600 8.700h8.200a3.900 3.900 0 1 0-1.200 3" fill="none" stroke="#fff" stroke-opacity=".7" stroke-width="3.400"/><path d="M1.600 8.700h8.200a3.900 3.900 0 1 0-1.200 3" fill="none" stroke="url(#ie)" stroke-width="2"/><path d="M.600 12.500C1.500 7.500 6.500 3 12.800 2.500" fill="none" stroke="#48b4f8" stroke-width="1" stroke-dasharray="2.500 1"/></svg>
<div class="t fv" style="left:32px;top:539px;letter-spacing:-0.22px;">Home - ePeformance</div>
<svg style="left:14px;top:557px" width="16" height="16" viewBox="0 0 16 16"><path d="M4.500 15.500h11V4" fill="none" stroke="#5c4e94" stroke-width="1"/><path d="M3.500.500h8l3 3v11h-11z" fill="url(#ipg)" stroke="#7f96e0" stroke-width="1"/><path d="M11.500.500v3h3" fill="#fff" stroke="#7f96e0" stroke-width="1"/><path d="M1.600 8.700h8.200a3.900 3.900 0 1 0-1.200 3" fill="none" stroke="#fff" stroke-opacity=".7" stroke-width="3.400"/><path d="M1.600 8.700h8.200a3.900 3.900 0 1 0-1.200 3" fill="none" stroke="url(#ie)" stroke-width="2"/><path d="M.600 12.500C1.500 7.500 6.500 3 12.800 2.500" fill="none" stroke="#48b4f8" stroke-width="1" stroke-dasharray="2.500 1"/></svg>
<div class="t fv" style="left:32px;top:559px;letter-spacing:0.11px;">Home - FINANCIAL OPERATI<span style="letter-spacing:0.81px">...</span></div>
<div class="trk" style="left:191px;top:155px;width:16px;height:420px"></div>
<div class="sbtn" style="left:191px;top:155px;width:16px;height:16px"></div>
<svg style="left:195px;top:161px" width="7" height="4" viewBox="0 0 7 4"><path d="M0 4h7v-1h-1v-1h-1v-1h-1v-1h-1v1h-1v1h-1v1h-1z" fill="#000"/></svg>
<div class="sbtn" style="left:191px;top:559px;width:16px;height:16px"></div>
<svg style="left:195px;top:565px" width="7" height="4" viewBox="0 0 7 4"><path d="M0 0h7v1h-1v1h-1v1h-1v1h-1v-1h-1v-1h-1v-1h-1z" fill="#000"/></svg>
<div class="sbtn" style="left:191px;top:246px;width:16px;height:104px"></div>
<div class="sunk" style="left:213px;top:105px;width:732px;height:472px;background:#d4d0c8"></div>
<div class="a" id="view" style="left:215px;top:107px;width:712px;height:452px;background:#fff;overflow:hidden">
<div class="a" style="left:45px;top:0;width:667px;height:452px;background:#f7f7f7;border-left:1px solid #c8c8c8"></div>
</div>
<div class="inp" style="left:271px;top:115px;width:139px;height:22px"></div>
<div class="sbtn" style="left:392px;top:117px;width:16px;height:18px"></div>
<svg style="left:396px;top:124px" width="7" height="4" viewBox="0 0 7 4"><path d="M0 0h7v1h-1v1h-1v1h-1v1h-1v-1h-1v-1h-1v-1h-1z" fill="#000"/></svg>
<div class="t sel" style="left:276px;top:119px;line-height:16px;height:16px">--- Please Select ---</div>
<div class="t pg" style="left:429px;top:127px;font-weight:normal;font-size:12px;letter-spacing:0">$</div>
<div class="inp" style="left:449px;top:116px;width:93px;height:20px"></div>
<div class="t sel" style="left:475px;top:119px;line-height:16px;height:16px">0.00</div>
<div class="inp" style="left:580px;top:115px;width:49px;height:22px"></div>
<div class="sbtn" style="left:611px;top:117px;width:16px;height:18px"></div>
<svg style="left:615px;top:124px" width="7" height="4" viewBox="0 0 7 4"><path d="M0 0h7v1h-1v1h-1v1h-1v1h-1v-1h-1v-1h-1v-1h-1z" fill="#000"/></svg>
<div class="t sel" style="left:585px;top:119px;line-height:16px;height:16px">No</div>
<div class="inp" style="left:676px;top:115px;width:49px;height:22px"></div>
<div class="sbtn" style="left:707px;top:117px;width:16px;height:18px"></div>
<svg style="left:711px;top:124px" width="7" height="4" viewBox="0 0 7 4"><path d="M0 0h7v1h-1v1h-1v1h-1v1h-1v-1h-1v-1h-1v-1h-1z" fill="#000"/></svg>
<div class="t sel" style="left:681px;top:119px;line-height:16px;height:16px">No</div>
<div class="t lnk" style="left:778px;top:106px;">Skip to
Property
Section</div>
<div class="t h1" style="left:271px;top:179px;letter-spacing:0.72px;">Co-Borrower 4</div>
<div class="t pg" style="left:271px;top:215px;letter-spacing:0.3px;">Last Name</div>
<div class="t pg" style="left:412px;top:215px;letter-spacing:0.4px;">First Name</div>
<div class="t pg" style="left:517px;top:215px;letter-spacing:1.3px;">MI</div>
<div class="t pg" style="left:568px;top:215px;letter-spacing:0.7px;">SSN</div>
<div class="t pg" style="left:667px;top:209px;letter-spacing:-0.35px;">DOB</div>
<div class="t pg" style="left:667px;top:222px;letter-spacing:-0.2px;">MMDDYYYY</div>
<div class="t pg" style="left:760px;top:215px;letter-spacing:0.3px;">Gender</div>
<div class="inp" style="left:271px;top:247px;width:129px;height:20px"></div>
<div class="inp" style="left:412px;top:247px;width:93px;height:20px"></div>
<div class="inp" style="left:517px;top:247px;width:39px;height:20px"></div>
<div class="inp" style="left:568px;top:247px;width:87px;height:20px"></div>
<div class="inp" style="left:667px;top:247px;width:81px;height:20px"></div>
<div class="inp" style="left:760px;top:246px;width:131px;height:22px"></div>
<div class="sbtn" style="left:873px;top:248px;width:16px;height:18px"></div>
<svg style="left:877px;top:255px" width="7" height="4" viewBox="0 0 7 4"><path d="M0 0h7v1h-1v1h-1v1h-1v1h-1v-1h-1v-1h-1v-1h-1z" fill="#000"/></svg>
<div class="t sel" style="left:765px;top:250px;line-height:16px;height:16px">-- Please Select --</div>
<div class="t pg" style="left:271px;top:283px;letter-spacing:0.3px;">Race - Check all that apply</div>
<div class="t pg" style="left:630px;top:283px;letter-spacing:0.21px;">Ethnicity</div>
<div class="inp" style="left:630px;top:308px;width:154px;height:22px"></div>
<div class="sbtn" style="left:766px;top:310px;width:16px;height:18px"></div>
<svg style="left:770px;top:317px" width="7" height="4" viewBox="0 0 7 4"><path d="M0 0h7v1h-1v1h-1v1h-1v1h-1v-1h-1v-1h-1v-1h-1z" fill="#000"/></svg>
<div class="t sel" style="left:635px;top:312px;line-height:16px;height:16px">-- Please Select --</div>
<div class="a" style="left:271px;top:308px;width:311px;height:118px;background:#fff;border-right:1px solid #808080;border-bottom:1px solid #808080"></div>
<div class="a" style="left:274px;top:311px;width:305px;height:112px;background:#f7f7f7;border-left:1px solid #808080;border-top:1px solid #808080"></div>
<div class="inp" style="left:284px;top:321px;width:13px;height:13px"></div>
<div class="t pg" style="left:305px;top:323px;letter-spacing:-0.35px;">White</div>
<div class="inp" style="left:284px;top:341px;width:13px;height:13px"></div>
<div class="t pg" style="left:304px;top:343px;letter-spacing:0.39px;">Black or African American</div>
<div class="inp" style="left:284px;top:361px;width:13px;height:13px"></div>
<div class="t pg" style="left:305px;top:363px;letter-spacing:0.37px;">American Indian or Alaska Native</div>
<div class="inp" style="left:284px;top:381px;width:13px;height:13px"></div>
<div class="t pg" style="left:305px;top:383px;letter-spacing:0.3px;">Asian</div>
<div class="inp" style="left:284px;top:401px;width:13px;height:13px"></div>
<div class="t pg" style="left:304px;top:403px;letter-spacing:0.32px;">Native Hawaiian or Other Pacific Islander</div>
<div class="t pg" style="left:271px;top:454px;letter-spacing:0.17px;">Marital Status</div>
<div class="t pg" style="left:423px;top:454px;letter-spacing:0.33px;">Monthly Gross Income</div>
<div class="t pg" style="left:580px;top:441px;letter-spacing:0.68px;">Self-</div>
<div class="t pg" style="left:580px;top:454px;letter-spacing:0.43px;">employed</div>
<div class="t pg" style="left:580px;top:467px;letter-spacing:2.05px;">Y/N</div>
<div class="t pg" style="left:676px;top:447px;letter-spacing:0.3px;">Property</div>
<div class="t pg" style="left:677px;top:460px;letter-spacing:0.47px;">Occupant Y/N</div>
<div class="inp" style="left:271px;top:501px;width:139px;height:22px"></div>
<div class="sbtn" style="left:392px;top:503px;width:16px;height:18px"></div>
<svg style="left:396px;top:510px" width="7" height="4" viewBox="0 0 7 4"><path d="M0 0h7v1h-1v1h-1v1h-1v1h-1v-1h-1v-1h-1v-1h-1z" fill="#000"/></svg>
<div class="t sel" style="left:276px;top:505px;line-height:16px;height:16px">--- Please Select ---</div>
<div class="t pg" style="left:429px;top:513px;font-weight:normal;font-size:12px;letter-spacing:0">$</div>
<div class="inp" style="left:449px;top:502px;width:93px;height:20px"></div>
<div class="t sel" style="left:475px;top:505px;line-height:16px;height:16px">0.00</div>
<div class="inp" style="left:580px;top:501px;width:49px;height:22px"></div>
<div class="sbtn" style="left:611px;top:503px;width:16px;height:18px"></div>
<svg style="left:615px;top:510px" width="7" height="4" viewBox="0 0 7 4"><path d="M0 0h7v1h-1v1h-1v1h-1v1h-1v-1h-1v-1h-1v-1h-1z" fill="#000"/></svg>
<div class="t sel" style="left:585px;top:505px;line-height:16px;height:16px">No</div>
<div class="inp" style="left:676px;top:501px;width:49px;height:22px"></div>
<div class="sbtn" style="left:707px;top:503px;width:16px;height:18px"></div>
<svg style="left:711px;top:510px" width="7" height="4" viewBox="0 0 7 4"><path d="M0 0h7v1h-1v1h-1v1h-1v1h-1v-1h-1v-1h-1v-1h-1z" fill="#000"/></svg>
<div class="t sel" style="left:681px;top:505px;line-height:16px;height:16px">No</div>
<div class="t lnk" style="left:778px;top:492px;">Skip to
Property
Section</div>
<div class="trk" style="left:927px;top:107px;width:16px;height:452px"></div>
<div class="sbtn" style="left:927px;top:107px;width:16px;height:16px"></div>
<svg style="left:931px;top:113px" width="7" height="4" viewBox="0 0 7 4"><path d="M0 4h7v-1h-1v-1h-1v-1h-1v-1h-1v1h-1v1h-1v1h-1z" fill="#000"/></svg>
<div class="sbtn" style="left:927px;top:543px;width:16px;height:16px"></div>
<svg style="left:931px;top:549px" width="7" height="4" viewBox="0 0 7 4"><path d="M0 0h7v1h-1v1h-1v1h-1v1h-1v-1h-1v-1h-1v-1h-1z" fill="#000"/></svg>
<div class="sbtn" style="left:927px;top:365px;width:16px;height:49px"></div>
<div class="trk" style="left:215px;top:559px;width:712px;height:16px"></div>
<div class="sbtn" style="left:215px;top:559px;width:16px;height:16px"></div>
<svg style="left:221px;top:564px" width="4" height="7" viewBox="0 0 4 7"><path d="M4 0v7h-1v-1h-1v-1h-1v-1h-1v-1h1v-1h1v-1h1v-1z" fill="#000"/></svg>
<div class="sbtn" style="left:911px;top:559px;width:16px;height:16px"></div>
<svg style="left:917px;top:564px" width="4" height="7" viewBox="0 0 4 7"><path d="M0 0v7h1v-1h1v-1h1v-1h1v-1h-1v-1h-1v-1h-1v-1z" fill="#000"/></svg>
<div class="sbtn" style="left:231px;top:559px;width:611px;height:16px"></div>
<div class="a" style="left:927px;top:559px;width:16px;height:16px;background:#d4d0c8"></div>
<div class="a" style="left:4px;top:579px;width:692px;height:18px;box-shadow:inset 1px 1px 0 #808080,inset -1px -1px 0 #fff"></div>
<div class="a" style="left:698px;top:579px;width:22px;height:18px;box-shadow:inset 1px 1px 0 #808080,inset -1px -1px 0 #fff"></div>
<div class="a" style="left:722px;top:579px;width:22px;height:18px;box-shadow:inset 1px 1px 0 #808080,inset -1px -1px 0 #fff"></div>
<div class="a" style="left:746px;top:579px;width:22px;height:18px;box-shadow:inset 1px 1px 0 #808080,inset -1px -1px 0 #fff"></div>
<div class="a" style="left:770px;top:579px;width:22px;height:18px;box-shadow:inset 1px 1px 0 #808080,inset -1px -1px 0 #fff"></div>
<div class="a" style="left:794px;top:579px;width:151px;height:18px;box-shadow:inset 1px 1px 0 #808080,inset -1px -1px 0 #fff"></div>
<svg style="left:6px;top:580px" width="16" height="16" viewBox="0 0 16 16"><path d="M4.500 15.500h11V4" fill="none" stroke="#5c4e94" stroke-width="1"/><path d="M3.500.500h8l3 3v11h-11z" fill="url(#ipg)" stroke="#7f96e0" stroke-width="1"/><path d="M11.500.500v3h3" fill="#fff" stroke="#7f96e0" stroke-width="1"/><path d="M1.600 8.700h8.200a3.900 3.900 0 1 0-1.200 3" fill="none" stroke="#fff" stroke-opacity=".7" stroke-width="3.400"/><path d="M1.600 8.700h8.200a3.900 3.900 0 1 0-1.200 3" fill="none" stroke="url(#ie)" stroke-width="2"/><path d="M.600 12.500C1.500 7.500 6.500 3 12.800 2.500" fill="none" stroke="#48b4f8" stroke-width="1" stroke-dasharray="2.500 1"/></svg>
<svg style="left:0;top:570px" width="949" height="31" viewBox="0 570 949 31">
<defs><linearGradient id="zM" x1="0" y1="0" x2="1" y2="1"><stop offset="0" stop-color="#8fd6ff"/><stop offset="1" stop-color="#2a86ec"/></linearGradient>
<radialGradient id="zG" cx=".4" cy=".3" r=".8"><stop offset="0" stop-color="#4fd04a"/><stop offset=".5" stop-color="#1f8ad8"/><stop offset="1" stop-color="#1440b0"/></radialGradient>
<radialGradient id="zB" cx=".4" cy=".4" r=".7"><stop offset="0" stop-color="#ffffff"/><stop offset="1" stop-color="#8f9ae0"/></radialGradient></defs>
<path d="M777.500 587v-3.500a2.800 2.800 0 0 1 5.600 0V587" fill="none" stroke="#000" stroke-width="2.400"/>
<path d="M777.500 587v-3.500a2.800 2.800 0 0 1 5.600 0V587" fill="none" stroke="#a09800" stroke-width="1"/>
<rect x="774.500" y="586.500" width="11" height="8" fill="#f4f000" stroke="#6a6400" stroke-width="1"/>
<path d="M785.500 587v8h-10" fill="none" stroke="#000" stroke-width="1"/>
<path d="M776 589.500h8M776 591.500h8" stroke="#807800" stroke-width="1"/>
<circle cx="800" cy="585" r="4.300" fill="url(#zG)"/>
<path d="M802.500 580.500h8v9.500h-8z" fill="url(#zM)" stroke="#2a5cc8" stroke-width=".8"/>
<ellipse cx="805.500" cy="592.500" rx="4.800" ry="3" fill="url(#zB)" stroke="#3a4cc0" stroke-width=".8"/>
</svg>

<div class="t ui" style="left:815px;top:582px;letter-spacing:-0.23px;">Local intranet</div>
<svg style="left:931px;top:584px" width="13" height="13" viewBox="0 0 12 12"><path d="M11 1L1 11M11 5l-6 6M11 9l-2 2" stroke="#808080" stroke-width="1.200"/><path d="M12 1L2 11M12 5l-6 6M12 9l-2 2" stroke="#fff" stroke-width="1"/></svg>
</div>
</body></html>
